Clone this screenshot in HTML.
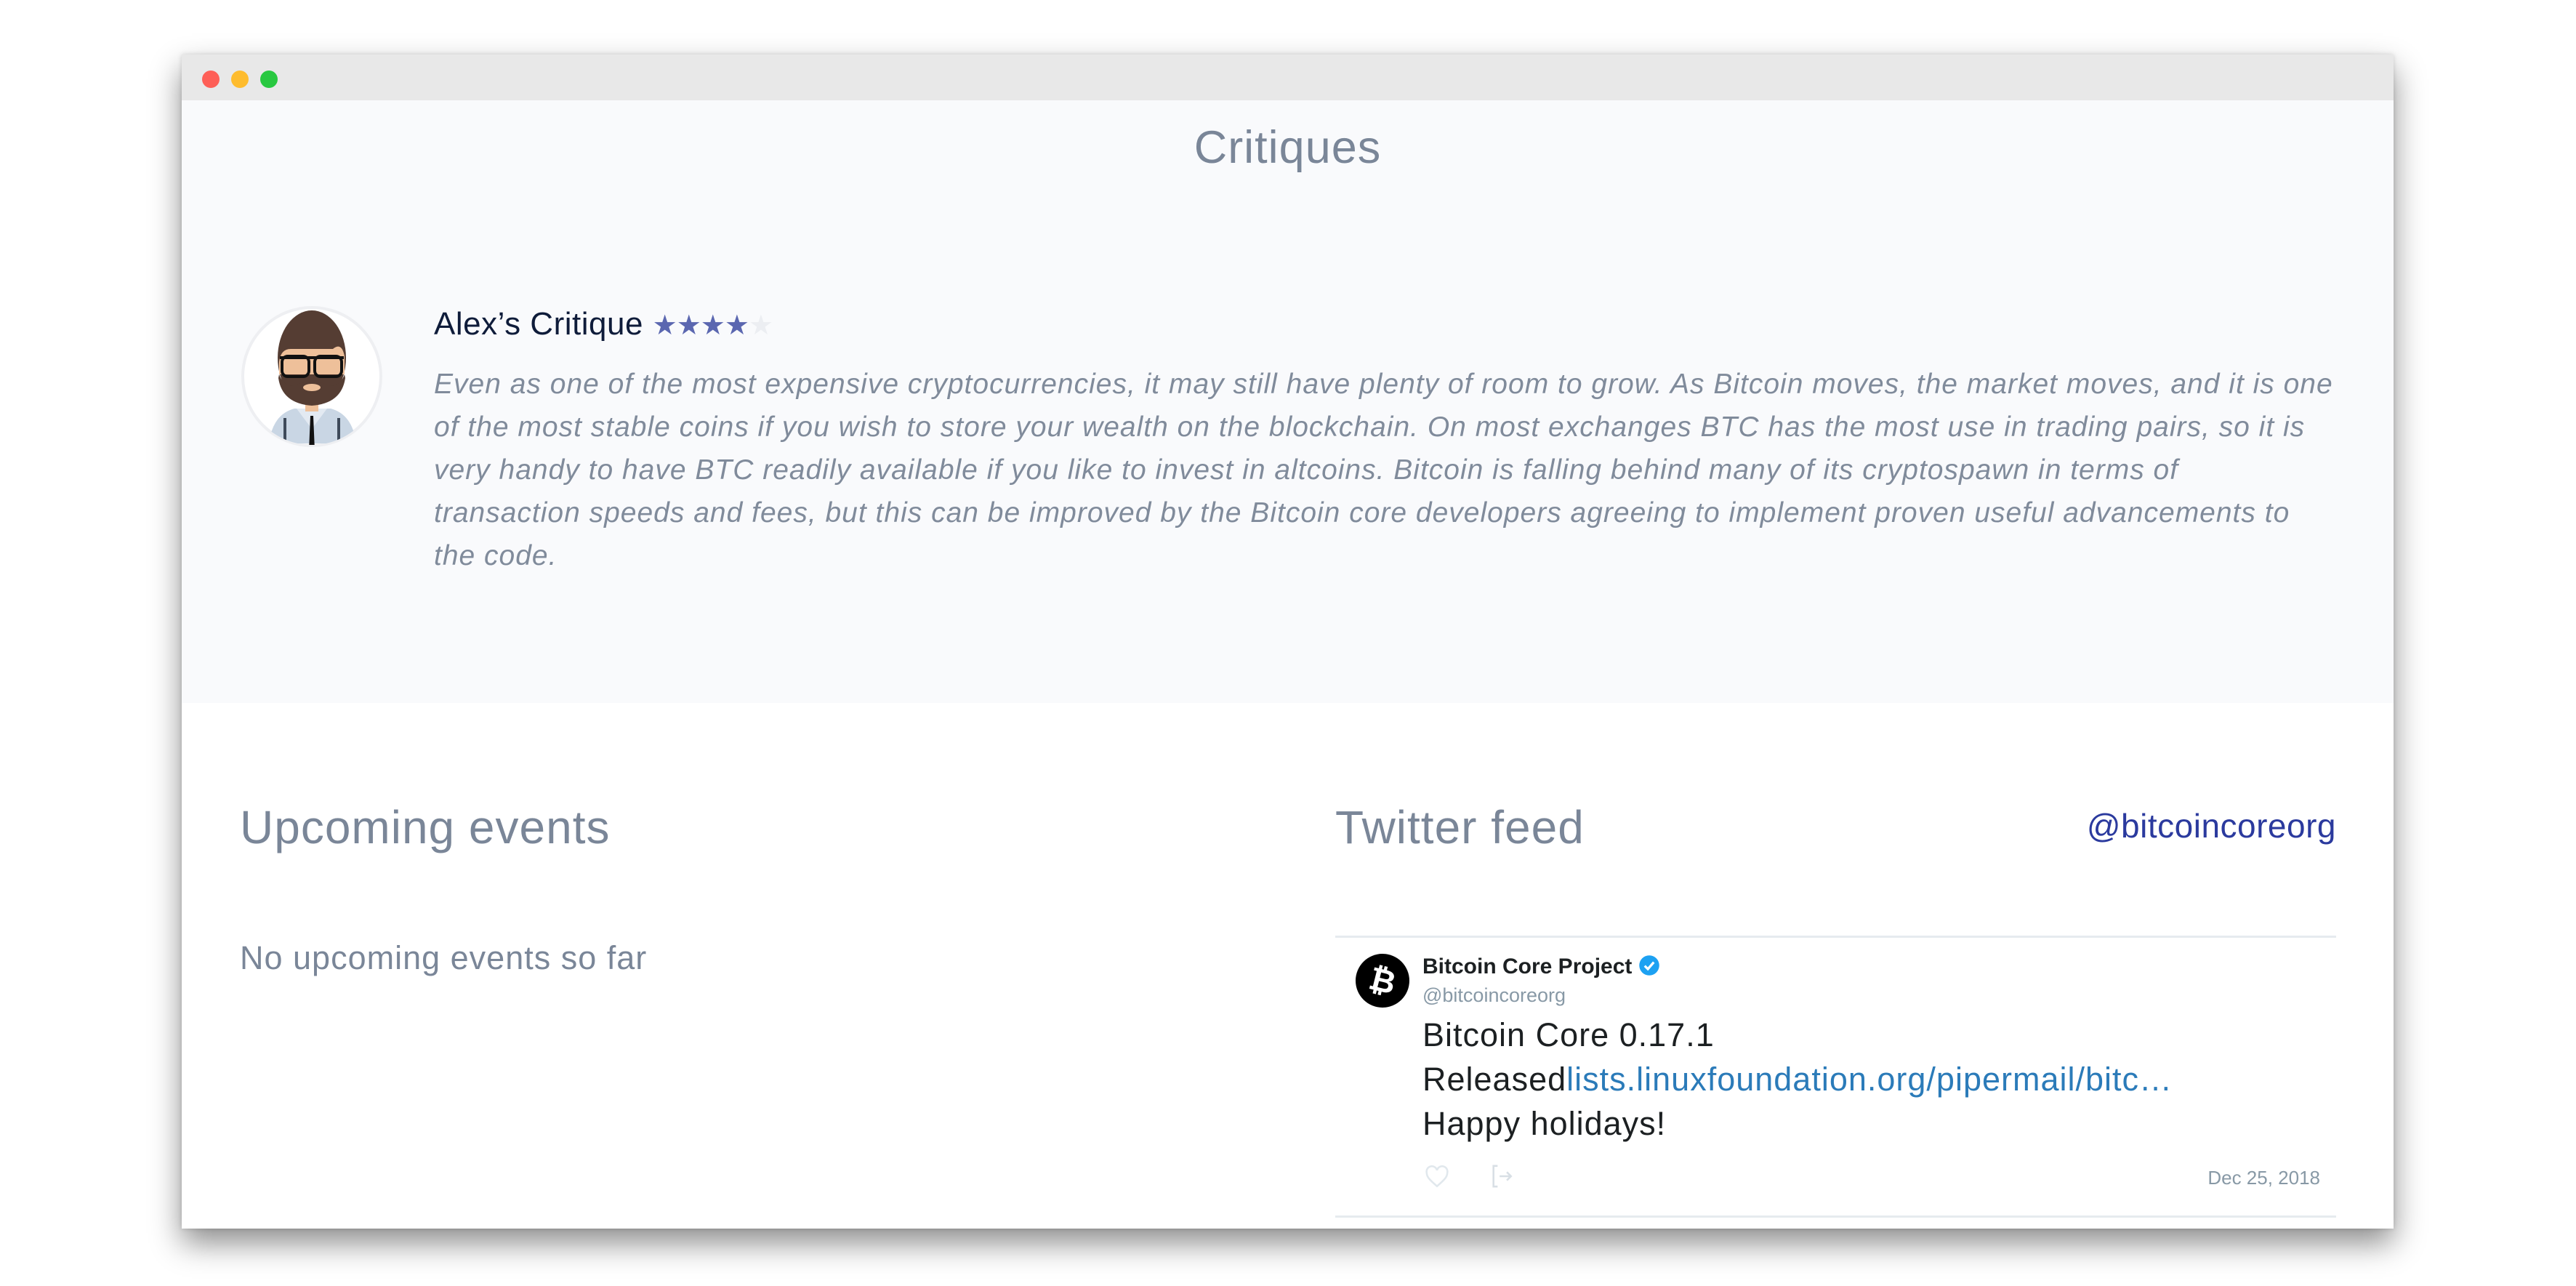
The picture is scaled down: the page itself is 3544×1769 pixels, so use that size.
<!DOCTYPE html>
<html><head><meta charset="utf-8"><style>
*{margin:0;padding:0;box-sizing:border-box}
body{width:3544px;height:1769px;background:#fff;position:relative;overflow:hidden;font-family:"Liberation Sans",sans-serif}
.win{position:absolute;left:250px;top:75px;width:3043px;height:1615px;background:#fff;box-shadow:0 20px 40px rgba(0,0,0,.45),0 0 6px rgba(0,0,0,.15);overflow:hidden}
.tb{position:absolute;left:0;top:0;width:100%;height:63px;background:#e8e8e8}
.dot{position:absolute;top:22px;width:24px;height:24px;border-radius:50%}
.grey{position:absolute;left:0;top:63px;width:100%;height:829px;background:#f9fafc}
.a{position:absolute;white-space:nowrap}
.p{font-style:italic;color:#808b9b;font-size:39px;letter-spacing:1px;line-height:59px}
.line{position:absolute;height:3px;background:#e6ebef}
</style></head><body>
<div class="win">
 <div class="tb">
  <div class="dot" style="left:28px;background:#fe5f57"></div>
  <div class="dot" style="left:68px;background:#febc2e"></div>
  <div class="dot" style="left:108px;background:#28c840"></div>
 </div>
 <div class="grey"></div>
 <div class="a" style="left:0;width:3043px;text-align:center;top:92px;font-size:63px;letter-spacing:1px;color:#7a8698">Critiques</div>
 <svg class="a" style="left:80px;top:345px" width="200" height="200" viewBox="0 0 200 200">
  <defs><clipPath id="c"><circle cx="99" cy="98" r="94"/></clipPath></defs>
  <circle cx="99" cy="98" r="95" fill="#fff" stroke="#eeeff2" stroke-width="4"/>
  <g clip-path="url(#c)">
   <path d="M40 190 Q45 150 75 142 L125 142 Q155 150 160 190 Z" fill="#c9d6e4"/>
   <path d="M78 142 L99 170 L120 142 Z" fill="#e3eaf2"/>
   <rect x="90" y="128" width="18" height="18" fill="#eec09a"/>
   <path d="M97 152 L101 152 L103 200 L95 200 Z" fill="#111"/>
   <rect x="60" y="155" width="4" height="45" fill="#3e4a5a"/>
   <rect x="134" y="155" width="4" height="45" fill="#3e4a5a"/>
   <ellipse cx="99" cy="72" rx="47" ry="65" fill="#553d33"/>
   <path d="M54 78 Q56 60 70 60 L128 60 Q140 50 144 70 L144 95 L54 95 Z" fill="#eec09a"/>
   <path d="M54 95 Q60 112 75 110 Q99 100 123 110 Q138 112 144 95 L145 100 Q140 135 99 138 Q58 135 53 100 Z" fill="#553d33"/>
   <ellipse cx="99" cy="113" rx="12" ry="5" fill="#eec09a"/>
   <rect x="58" y="70" width="37" height="28" rx="8" fill="none" stroke="#111" stroke-width="4"/>
   <rect x="103" y="70" width="37" height="28" rx="8" fill="none" stroke="#111" stroke-width="4"/>
   <path d="M55 72 H143" stroke="#111" stroke-width="4"/>
  </g>
 </svg>
 <div class="a" style="left:347px;top:346px;font-size:44px;letter-spacing:.5px;color:#0f1c3a">Alex’s Critique <span style="font-size:38px;color:#5b67b0;letter-spacing:-1px">★★★★</span><span style="font-size:38px;color:#eceef2">★</span></div>
 <div class="a p" style="left:347px;top:424px">Even as one of the most expensive cryptocurrencies, it may still have plenty of room to grow. As Bitcoin moves, the market moves, and it is one</div>
 <div class="a p" style="left:347px;top:483px">of the most stable coins if you wish to store your wealth on the blockchain. On most exchanges BTC has the most use in trading pairs, so it is</div>
 <div class="a p" style="left:347px;top:542px">very handy to have BTC readily available if you like to invest in altcoins. Bitcoin is falling behind many of its cryptospawn in terms of</div>
 <div class="a p" style="left:347px;top:601px">transaction speeds and fees, but this can be improved by the Bitcoin core developers agreeing to implement proven useful advancements to</div>
 <div class="a p" style="left:347px;top:660px">the code.</div>

 <div class="a" style="left:80px;top:1026px;font-size:64px;letter-spacing:1px;color:#7a8698">Upcoming events</div>
 <div class="a" style="left:80px;top:1217px;font-size:45px;letter-spacing:1px;color:#7a8698">No upcoming events so far</div>
 <div class="a" style="left:1587px;top:1026px;font-size:64px;letter-spacing:1px;color:#7a8698">Twitter feed</div>
 <div class="a" style="right:79px;top:1034px;font-size:46px;letter-spacing:.5px;color:#2b3a9e">@bitcoincoreorg</div>

 <div class="line" style="left:1587px;top:1212px;width:1377px"></div>
 <div class="line" style="left:1587px;top:1597px;width:1377px"></div>
 <svg class="a" style="left:1615px;top:1237px" width="74" height="74" viewBox="0 0 74 74">
  <circle cx="37" cy="37" r="37" fill="#000"/>
  <text x="37" y="52" text-anchor="middle" font-family="Liberation Sans" font-weight="bold" font-size="44" fill="#fff" transform="rotate(14 37 37)">₿</text>
 </svg>
 <div class="a" style="left:1707px;top:1238px;font-size:30px;font-weight:bold;color:#1c2022">Bitcoin Core Project
  <svg width="30" height="30" viewBox="0 0 24 24" style="vertical-align:-4px"><circle cx="12" cy="12" r="11" fill="#1da1f2"/><path d="M7 12.5 L10.5 16 L17 8.5" stroke="#fff" stroke-width="2.6" fill="none"/></svg></div>
 <div class="a" style="left:1707px;top:1279px;font-size:27px;color:#8899a6">@bitcoincoreorg</div>
 <svg class="a" style="left:3076px;top:1241px" width="38" height="34" viewBox="0 0 24 20"><path d="M24 2.4a9.8 9.8 0 0 1-2.8.8A4.9 4.9 0 0 0 23.3.5a9.9 9.9 0 0 1-3.1 1.2A4.9 4.9 0 0 0 11.8 6 14 14 0 0 1 1.7.9a4.9 4.9 0 0 0 1.5 6.6A4.9 4.9 0 0 1 1 6.9a4.9 4.9 0 0 0 3.9 4.8 4.9 4.9 0 0 1-2.2.1 4.9 4.9 0 0 0 4.6 3.4A9.9 9.9 0 0 1 0 17.2 14 14 0 0 0 7.5 19.4c9.1 0 14-7.5 14-14v-.6A10 10 0 0 0 24 2.4z" fill="#dfe5ea"/></svg>
 <div class="a" style="left:1707px;top:1318px;font-size:45px;letter-spacing:1px;line-height:61px;color:#1c2022">Bitcoin Core 0.17.1<br>Released<span style="color:#2b7bb9">lists.linuxfoundation.org/pipermail/bitc…</span><br>Happy holidays!</div>
 <svg class="a" style="left:1710px;top:1528px" width="34" height="32" viewBox="0 0 24 22"><path d="M12 20 C5 14 2 11 2 7 A4.5 4.5 0 0 1 12 4.5 A4.5 4.5 0 0 1 22 7 C22 11 19 14 12 20Z" fill="none" stroke="#e1e8ed" stroke-width="1.8"/></svg>
 <svg class="a" style="left:1800px;top:1526px" width="32" height="34" viewBox="0 0 22 24"><path d="M7 2 H3 V22 H7 M9 12 H20 M16 8 L20 12 L16 16" fill="none" stroke="#d8dfe5" stroke-width="1.8"/></svg>
 <div class="a" style="right:101px;top:1530px;font-size:26px;color:#8899a6">Dec 25, 2018</div>
</div>
</body></html>
